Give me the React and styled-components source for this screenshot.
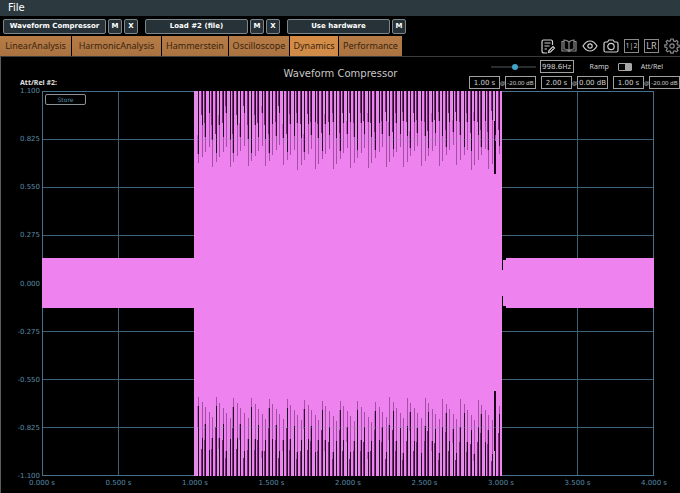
import { useState } from "react";
import styled, { createGlobalStyle } from "styled-components";

const PLOT_W = 612;
const PLOT_H = 385;
const PINK = "#ee82ee";

const yTicks = ["1.100", "0.825", "0.550", "0.275", "0.000", "-0.275", "-0.550", "-0.825", "-1.100"];
const xTicks = ["0.000 s", "0.500 s", "1.000 s", "1.500 s", "2.000 s", "2.500 s", "3.000 s", "3.500 s", "4.000 s"];

const tabs = [
    { name: "LinearAnalysis", width: 71 },
    { name: "HarmonicAnalysis", width: 89 },
    { name: "Hammerstein", width: 66 },
    { name: "Oscilloscope", width: 60 },
    { name: "Dynamics", width: 48 },
    { name: "Performance", width: 63 },
];

const slots = [
    { name: "Waveform Compressor", removable: true },
    { name: "Load #2 (file)", removable: true },
    { name: "Use hardware", removable: false },
];

const stages = [
    { time: "1.00 s", level: "-20.00 dB" },
    { time: "2.00 s", level: "0.00 dB" },
    { time: "1.00 s", level: "-20.00 dB" },
];

// gaps between the sampled cycles of the loud section
function buildStripes(fromTop) {
    const out = [];
    const pitch = 3.54;
    for (let i = 0; i < 86; i++) {
        const x = Math.round(156 + i * pitch);
        const phase = (i * 1.02 + (fromTop ? 1.5 : 0)) % 5;
        const end = Math.round(79 - phase * 5);
        const dark = Math.round(end * (0.88 - ((i * 3) % 5) * 0.12));
        const side = Math.round(dark * 0.7);
        out.push({ x, end, dark, side });
    }
    return out;
}

function Stripes({ fromTop }) {
    const place = (h) => (fromTop ? 0 : PLOT_H - h);
    return (
        <g>
            {buildStripes(fromTop).map((s, i) => (
                <g key={s.x}>
                    <rect x={s.x} y={place(s.end)} width="1" height={s.end} fill="#a24fa6" />
                    <rect x={s.x} y={place(s.dark)} width="1" height={s.dark} fill="#2a022c" />
                    <rect x={s.x - 1} y={place(s.dark)} width="1" height={s.dark} fill={i % 2 ? "#d493dc" : "#b768bb"} />
                    <rect x={s.x - 1} y={place(s.side)} width="1" height={s.side} fill={i % 3 ? "#6d3270" : "#c9a2d0"} />
                </g>
            ))}
        </g>
    );
}

function Waveform() {
    const lines = [1, 2, 3, 4, 5, 6, 7];
    return (
        <PlotSvg viewBox={`0 0 ${PLOT_W} ${PLOT_H}`} preserveAspectRatio="none" shapeRendering="crispEdges" aria-label="Waveform">
            <g fill="#3d6077">
                {lines.map((n) => (
                    <rect key={n} x={Math.floor((n * PLOT_W) / 8)} y="0" width="1" height={PLOT_H} />
                ))}
                {lines.map((n) => (
                    <rect key={n} x="0" y={n * 48} width={PLOT_W} height="1" />
                ))}
            </g>
            <path d={`M0 0H${PLOT_W}V${PLOT_H}H0Z`} fill="none" stroke="#47718b" strokeWidth="2" />
            <rect x="0" y="167" width="153" height="50" fill={PINK} />
            <rect x="152" y="0" width="308" height={PLOT_H} fill={PINK} />
            <path d="M460 179h1v-10h3v-2h148v50h-148v-2h-3v-10h-1z" fill={PINK} />
            <Stripes fromTop />
            <Stripes />
            <rect x="452" y="30" width="1" height="53" fill="#1d001d" />
            <rect x="453" y="50" width="1" height="33" fill="#1d001d" />
            <rect x="452" y="300" width="1" height="60" fill="#1d001d" />
            <rect x="453" y="300" width="1" height="40" fill="#1d001d" />
            <g fill="#a58fc0" opacity="0.35">
                <rect x="153" y="48" width="307" height="1" />
                <rect x="153" y="336" width="307" height="1" />
            </g>
        </PlotSvg>
    );
}

function NotesIcon() {
    return (
        <Icon viewBox="0 0 16 16">
            <path d="M7 15H4Q2 15 2 13V3.500Q2 2 3.500 2H11Q12.500 2 12.500 3.500V7M4.500 5H10.500M4.500 8H9.500M4.500 11H7" />
            <path d="M8.500 14.500L9 12.500L13 8.500L14.500 10L10.500 14Z" />
        </Icon>
    );
}

function BookIcon() {
    return (
        <Icon viewBox="0 0 16 16" $dim>
            <path d="M8 4Q6 2 3 2V11Q6 11 8 12.500Q10 11 13 11V2Q10 2 8 4V12.500M3 3.500H1V13H7L8 13.500L9 13H15V3.500H13" />
        </Icon>
    );
}

function EyeIcon() {
    return (
        <Icon viewBox="0 0 16 16">
            <path d="M1 8Q4 3 8 3T15 8Q12 13 8 13T1 8Z" />
            <circle cx="8" cy="8" r="2.200" />
        </Icon>
    );
}

function CameraIcon() {
    return (
        <Icon viewBox="0 0 16 16">
            <path d="M2.500 4H4.500L6 2H10L11.500 4H13.500Q15 4 15 5.500V12.500Q15 14 13.500 14H2.500Q1 14 1 12.500V5.500Q1 4 2.500 4Z" />
            <circle cx="8" cy="8.500" r="3.200" />
        </Icon>
    );
}

function GearIcon() {
    return (
        <Icon viewBox="0 0 16 16" $dim>
            <path d="M6.800 1H9.200L9.700 3L11 3.600L12.800 2.500L14 4L13 5.700L13.400 6.800L15.200 7.200V9L13.400 9.400L12.900 10.800L13.900 12.500L12.500 13.800L10.800 12.800L9.600 13.300L9.100 15.200H6.900L6.400 13.300L5.200 12.800L3.500 13.800L2.200 12.400L3.200 10.700L2.700 9.400L0.800 9V7.100L2.700 6.700L3.200 5.400L2.200 3.700L3.500 2.300L5.200 3.400L6.400 2.900Z" />
            <circle cx="8" cy="8" r="2.200" />
        </Icon>
    );
}

export default function App() {
    const [active, setActive] = useState("Dynamics");
    const [ramp, setRamp] = useState(true);

    return (
        <Page>
            <GlobalStyle />
            <MenuBar>
                <MenuItem>File</MenuItem>
            </MenuBar>
            <SlotBar>
                {slots.map((slot) => (
                    <Slot key={slot.name}>
                        <SlotButton $wide>{slot.name}</SlotButton>
                        <SlotButton>M</SlotButton>
                        {slot.removable && <SlotButton>X</SlotButton>}
                    </Slot>
                ))}
            </SlotBar>
            <TabRow>
                <Tabs role="tablist">
                    {tabs.map((tab) => (
                        <Tab
                            key={tab.name}
                            role="tab"
                            aria-selected={tab.name === active}
                            $active={tab.name === active}
                            $width={tab.width}
                            onClick={() => setActive(tab.name)}
                        >
                            {tab.name}
                        </Tab>
                    ))}
                </Tabs>
                <Tools>
                    <ToolButton aria-label="Notes"><NotesIcon /></ToolButton>
                    <ToolButton aria-label="Manual"><BookIcon /></ToolButton>
                    <ToolButton aria-label="View"><EyeIcon /></ToolButton>
                    <ToolButton aria-label="Snapshot"><CameraIcon /></ToolButton>
                    <ToolButton $boxed>1|2</ToolButton>
                    <ToolButton $boxed $large>LR</ToolButton>
                    <ToolButton aria-label="Settings"><GearIcon /></ToolButton>
                </Tools>
            </TabRow>
            <Panel>
                <Header>
                    <StageLabel>Att/Rel #2:</StageLabel>
                    <Title>Waveform Compressor</Title>
                    <Controls>
                        <ControlRow>
                            <Slider type="range" aria-label="Frequency" defaultValue="56" />
                            <Field aria-label="Frequency value" defaultValue="998.6Hz" $width={34} />
                            <Modes>
                                <Mode htmlFor="mode">Ramp</Mode>
                                <Switch id="mode" type="checkbox" checked={ramp} onChange={() => setRamp(!ramp)} />
                                <Mode htmlFor="mode">Att/Rel</Mode>
                            </Modes>
                        </ControlRow>
                        <StageRow>
                            {stages.map((stage, i) => (
                                <Stage key={i}>
                                    <Field aria-label={`Time ${i + 1}`} defaultValue={stage.time} $width={31} />
                                    <At>@</At>
                                    <Field aria-label={`Level ${i + 1}`} defaultValue={stage.level} $width={31} $small={stage.level.length > 8} />
                                </Stage>
                            ))}
                        </StageRow>
                    </Controls>
                </Header>
                <Chart>
                    <YAxis>
                        {yTicks.map((t) => <Tick key={t}><span>{t}</span></Tick>)}
                    </YAxis>
                    <Plot>
                        <Waveform />
                        <StoreButton>Store</StoreButton>
                    </Plot>
                    <XAxis>
                        {xTicks.map((t) => <XTick key={t}><span>{t}</span></XTick>)}
                    </XAxis>
                </Chart>
            </Panel>
        </Page>
    );
}

const GlobalStyle = createGlobalStyle`
    *{
        box-sizing: border-box;
    }

    body{
        margin: 0;
        background-color: black;
        font-family: "Noto Sans", "DejaVu Sans", sans-serif;
    }

    button, input{
        font-family: inherit;
        margin: 0;
        padding: 0;
    }
`;

const Page = styled.div`
    display: flex;
    flex-direction: column;
    min-height: 100vh;
    background-color: black;
    overflow: hidden;
`;

const MenuBar = styled.nav`
    display: flex;
    height: 16px;
    padding-left: 8px;
    background-color: #2c3a40;
`;

const MenuItem = styled.button`
    border: none;
    background: none;
    color: white;
    font-size: 10px;
    line-height: 14px;
    font-family: "DejaVu Sans", sans-serif;
`;

const SlotBar = styled.div`
    display: flex;
    gap: 7px;
    height: 20px;
    padding: 3px 3px 2px;
`;

const Slot = styled.div`
    display: flex;
    gap: 2px;
`;

const SlotButton = styled.button`
    width: ${(p) => (p.$wide ? "103px" : "14px")};
    height: 15px;
    border: 1px solid #7b878b;
    border-radius: 2px;
    background-color: #263238;
    color: white;
    font-family: "DejaVu Sans", sans-serif;
    font-size: 7px;
    line-height: 13px;
    font-weight: bold;
    text-align: center;
    white-space: nowrap;
`;

const TabRow = styled.div`
    display: flex;
    justify-content: space-between;
    height: 20px;
`;

const Tabs = styled.div`
    display: flex;
    gap: 1px;
`;

const Tab = styled.button`
    min-width: ${(p) => p.$width}px;
    border: none;
    background: ${(p) => (p.$active ? "linear-gradient(#d58d45, #d08b49)" : "linear-gradient(#b77c46, #a97341)")};
    color: #3a2410;
    font-size: 9px;
    line-height: 20px;
`;

const Tools = styled.div`
    display: flex;
    align-items: center;
    gap: 5px;
`;

const ToolButton = styled.button`
    display: flex;
    align-items: center;
    justify-content: center;
    width: ${(p) => (p.$boxed ? "15px" : "16px")};
    height: ${(p) => (p.$boxed ? "14px" : "16px")};
    border: ${(p) => (p.$boxed ? "1px solid #8a8a8a" : "none")};
    background: none;
    color: #c4c4c4;
    font-size: ${(p) => (p.$large ? "9px" : "7px")};
    line-height: 12px;
`;

const Icon = styled.svg`
    width: 16px;
    height: 16px;
    fill: none;
    stroke: ${(p) => (p.$dim ? "#8c8c8c" : "#d0d0d0")};
    stroke-width: 1.2;
`;

const Panel = styled.main`
    display: flex;
    flex-direction: column;
    flex: 1;
    border-top: 1px solid #3c3c3c;
    border-left: 1px solid #5c5c5c;
`;

const Header = styled.div`
    display: grid;
    grid-template-columns: 1fr auto 1fr;
    height: 34px;
`;

const StageLabel = styled.span`
    align-self: end;
    padding-left: 19px;
    color: #e0e0e0;
    font-size: 7px;
    line-height: 16px;
    font-weight: bold;
`;

const Title = styled.h1`
    margin: 0;
    align-self: center;
    color: #c8c8c8;
    font-family: "DejaVu Sans", sans-serif;
    font-size: 10px;
    line-height: 16px;
    font-weight: normal;
`;

const Controls = styled.div`
    display: flex;
    flex-direction: column;
    align-items: flex-end;
    gap: 3px;
    padding-top: 3px;
`;

const ControlRow = styled.div`
    display: flex;
    align-items: center;
    padding-right: 17px;
    gap: 4px;
`;

const Modes = styled.div`
    display: flex;
    align-items: center;
    gap: 9px;
    padding-left: 12px;
`;

const StageRow = styled.div`
    display: flex;
    gap: 5px;
`;

const Stage = styled.div`
    display: flex;
    align-items: center;
`;

const Field = styled.input`
    width: ${(p) => p.$width}px;
    height: 13px;
    border: 1px solid #a0a0a0;
    background-color: black;
    color: #d0d0d0;
    font-family: ${(p) => (p.$small ? "inherit" : '"DejaVu Sans", sans-serif')};
    font-size: ${(p) => (p.$small ? "6px" : "7px")};
    text-align: center;
`;

const At = styled.span`
    width: 5px;
    color: #c0c0c0;
    font-size: 6px;
    line-height: 12px;
`;

const Slider = styled.input`
    appearance: none;
    width: 45px;
    height: 12px;
    background: linear-gradient(#262c2f, #262c2f) center / 100% 2px no-repeat;

    &::-webkit-slider-thumb{
        appearance: none;
        width: 6px;
        height: 6px;
        border-radius: 50%;
        background-color: #42a2c8;
    }
`;

const Mode = styled.label`
    color: #d0d0d0;
    font-size: 7px;
    line-height: 12px;
`;

const Switch = styled.input`
    appearance: none;
    width: 14px;
    height: 8px;
    border: 1px solid #a8a8a8;
    border-radius: 1px;
    background: linear-gradient(90deg, black 50%, #a8a8a8 50%);
`;

const Chart = styled.div`
    display: grid;
    flex: 1;
    grid-template-columns: 41px 1fr;
    grid-template-rows: 1fr 17px;
    padding-right: 26px;
`;

const YAxis = styled.div`
    display: flex;
    flex-direction: column;
    justify-content: space-between;
    padding-right: 2px;
    text-align: right;
`;

const Tick = styled.div`
    display: flex;
    align-items: center;
    justify-content: flex-end;
    height: 0;
    color: #5a8ba8;
    font-family: "DejaVu Sans", sans-serif;
    font-size: 7px;
    line-height: 8px;
`;

const Plot = styled.div`
    display: grid;

    > *{
        grid-area: 1 / 1;
    }
`;

const PlotSvg = styled.svg`
    width: 100%;
    height: 100%;
    min-height: 0;
`;

const StoreButton = styled.button`
    width: 41px;
    height: 11px;
    margin: 3px;
    border: 1px solid #8a9296;
    border-radius: 2px;
    background-color: black;
    color: #5a8ba8;
    font-family: "DejaVu Sans", sans-serif;
    font-size: 6px;
    line-height: 9px;
`;

const XAxis = styled.div`
    display: flex;
    justify-content: space-between;
    grid-column: 2;
    padding-top: 3px;
`;

const XTick = styled(Tick)`
    justify-content: center;
    width: 0;
    height: 8px;
    white-space: nowrap;
`;
